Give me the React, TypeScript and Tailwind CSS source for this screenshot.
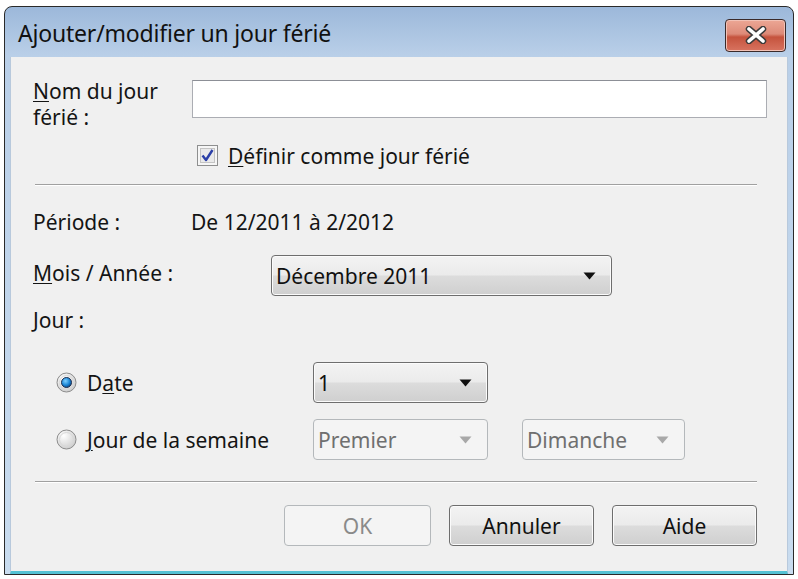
import React from 'react'

const font = { fontFamily: '"Noto Sans", "Open Sans", sans-serif' }

function Arrow({ disabled }: { disabled?: boolean }) {
  return (
    <svg width="13" height="8" viewBox="0 0 13 8" className="shrink-0">
      <path d="M0.5 0.5 L12.5 0.5 L6.5 7.5 Z" fill={disabled ? '#a8a8a8' : '#101010'} />
    </svg>
  )
}

function Select({ value, width, disabled }: { value: string; width: string; disabled?: boolean }) {
  return (
    <div
      className={
        disabled
          ? `${width} h-[41px] flex items-center justify-between pl-[4px] pr-[15px] rounded-[4px] border border-[#b4b8bb] bg-[#f4f4f4] text-[#6f6f6f]`
          : `${width} h-[41px] flex items-center justify-between pl-[4px] pr-[15px] rounded-[4px] border border-[#6e6e6e] bg-[linear-gradient(#f3f3f3_0%,#ebebeb_48%,#dcdcdc_52%,#cfcfcf_100%)] text-[#111] shadow-[inset_0_0_0_1px_#fbfbfb]`
      }
    >
      <span className="text-[21px] leading-[26px]">{value}</span>
      <Arrow disabled={disabled} />
    </div>
  )
}

function Button({ label, width, disabled }: { label: string; width: string; disabled?: boolean }) {
  return (
    <div
      className={
        disabled
          ? `${width} h-[41px] flex items-center justify-center rounded-[4px] border border-[#b4b8bb] bg-[#f4f4f4] text-[#8a8a8a] text-[21px]`
          : `${width} h-[41px] flex items-center justify-center rounded-[4px] border border-[#6e6e6e] bg-[linear-gradient(#f3f3f3_0%,#ebebeb_48%,#dcdcdc_52%,#cfcfcf_100%)] shadow-[inset_0_0_0_1px_#fbfbfb] text-[#111] text-[21px]`
      }
    >
      {label}
    </div>
  )
}

function Radio({ checked }: { checked?: boolean }) {
  return (
    <svg width="21" height="21" viewBox="0 0 21 21" className="shrink-0">
      <defs>
        <radialGradient id="rbg" cx="0.35" cy="0.3" r="0.8">
          <stop offset="0" stopColor="#ffffff" />
          <stop offset="1" stopColor="#c9c9c9" />
        </radialGradient>
        <radialGradient id="dot" cx="0.4" cy="0.35" r="0.7">
          <stop offset="0" stopColor="#7fd0ff" />
          <stop offset="0.6" stopColor="#1a86d6" />
          <stop offset="1" stopColor="#0b3f7a" />
        </radialGradient>
      </defs>
      <circle cx="10.5" cy="10.5" r="9.5" fill="url(#rbg)" stroke="#8c8c8c" strokeWidth="1" />
      <circle cx="10.5" cy="10.5" r="7" fill="none" stroke="#d8d8d8" strokeWidth="1" />
      {checked && <circle cx="10.5" cy="10.5" r="5" fill="url(#dot)" stroke="#1f2f4f" strokeWidth="1" />}
    </svg>
  )
}

function Checkbox() {
  return (
    <svg width="21" height="21" viewBox="0 0 21 21" className="shrink-0">
      <rect x="0.5" y="0.5" width="20" height="20" fill="#f6f6f6" stroke="#8e8f8f" />
      <rect x="3.5" y="3.5" width="14" height="14" fill="#eaeaea" stroke="#c4c4c4" />
      <path d="M5.5 10.5 L9 15 L15.5 5" fill="none" stroke="#2b3fa8" strokeWidth="2.4" strokeLinejoin="round" />
    </svg>
  )
}

export default function App() {
  return (
    <div className="w-[798px] h-[579px] bg-white pl-[4px] pt-[6px] overflow-hidden" style={font}>
      <div className="w-[790px] h-[569px] flex flex-col border border-[#2a2a2a] rounded-t-[8px] bg-[linear-gradient(#9cb8da,#b9cfe8_48px,#c9dcef)] overflow-hidden">
        {/* Title bar */}
        <div className="h-[50px] shrink-0 flex items-center justify-between pl-[13px] pr-[7px]">
          <span className="text-[23px] leading-[30px] text-[#111] tracking-[-0.2px] mt-[2px]">Ajouter/modifier un jour férié</span>
          <div className="w-[61px] h-[33px] mt-[6px] rounded-[4px] border border-[#3a2a2a] bg-[linear-gradient(#eca795_0%,#dd8a78_45%,#c5533d_55%,#d87360_100%)] shadow-[inset_0_0_0_1px_#f2c2b6] flex items-center justify-center">
            <svg width="24" height="18" viewBox="0 0 24 18">
              <path d="M5 3 L19 15 M19 3 L5 15" stroke="#3b3b3b" strokeWidth="6.5" strokeLinecap="round" />
              <path d="M5 3 L19 15 M19 3 L5 15" stroke="#ffffff" strokeWidth="3.6" strokeLinecap="round" />
            </svg>
          </div>
        </div>

        {/* Body */}
        <div className="flex-1 mx-[5px] border-l border-r border-[#b8c9dc] border-b-[3px] border-b-[#53c2d4] bg-[#f0f0f0] text-[#141414] text-[21px] leading-[26px] flex flex-col pl-[22px] pr-[20px]">
          {/* Name */}
          <div className="flex items-start mt-[23px] h-[38px]">
            <div className="w-[160px] -mt-[2px]">
              <u className="underline-offset-2 decoration-1">N</u>om du jour
              <br />
              férié :
            </div>
            <div className="w-[577px] h-[38px] bg-white border border-[#abadb3] border-t-[#8c8f96]" />
          </div>

          {/* Checkbox */}
          <div className="flex items-center mt-[27px] ml-[164px] gap-[10px] h-[21px]">
            <Checkbox />
            <span>
              <u className="underline-offset-2 decoration-1">D</u>éfinir comme jour férié
            </span>
          </div>

          <div className="mt-[18px] ml-[2px] w-[722px] h-[2px] border-t border-[#a0a0a0] border-b border-b-white" />

          {/* Période */}
          <div className="flex items-center mt-[23px] h-[26px]">
            <span className="w-[158px]">Période :</span>
            <span>De 12/2011 à 2/2012</span>
          </div>

          {/* Mois */}
          <div className="flex items-center mt-[20px] h-[41px]">
            <span className="w-[238px] -mt-[6px]">
              <u className="underline-offset-2 decoration-1">M</u>ois / Année :
            </span>
            <Select value="Décembre 2011" width="w-[341px]" />
          </div>

          {/* Jour */}
          <div className="flex items-center mt-[11px] h-[26px]">
            <span>Jour :</span>
          </div>

          {/* Date */}
          <div className="flex items-center mt-[29px] h-[41px]">
            <div className="w-[280px] flex items-center pl-[23px] gap-[10px]">
              <Radio checked />
              <span>
                D<u className="underline-offset-2 decoration-1">a</u>te
              </span>
            </div>
            <Select value="1" width="w-[175px]" />
          </div>

          {/* Jour de la semaine */}
          <div className="flex items-center mt-[16px] h-[41px]">
            <div className="w-[280px] flex items-center pl-[23px] gap-[10px]">
              <Radio />
              <span>
                <u className="underline-offset-2 decoration-1">J</u>our de la semaine
              </span>
            </div>
            <Select value="Premier" width="w-[175px]" disabled />
            <div className="w-[34px]" />
            <Select value="Dimanche" width="w-[163px]" disabled />
          </div>

          <div className="mt-[21px] ml-[2px] w-[722px] h-[2px] border-t border-[#a0a0a0] border-b border-b-white" />

          {/* Buttons */}
          <div className="flex items-center justify-end gap-[18px] mt-[22px] w-[724px]">
            <Button label="OK" width="w-[147px]" disabled />
            <Button label="Annuler" width="w-[145px]" />
            <Button label="Aide" width="w-[145px]" />
          </div>
        </div>
      </div>
    </div>
  )
}
